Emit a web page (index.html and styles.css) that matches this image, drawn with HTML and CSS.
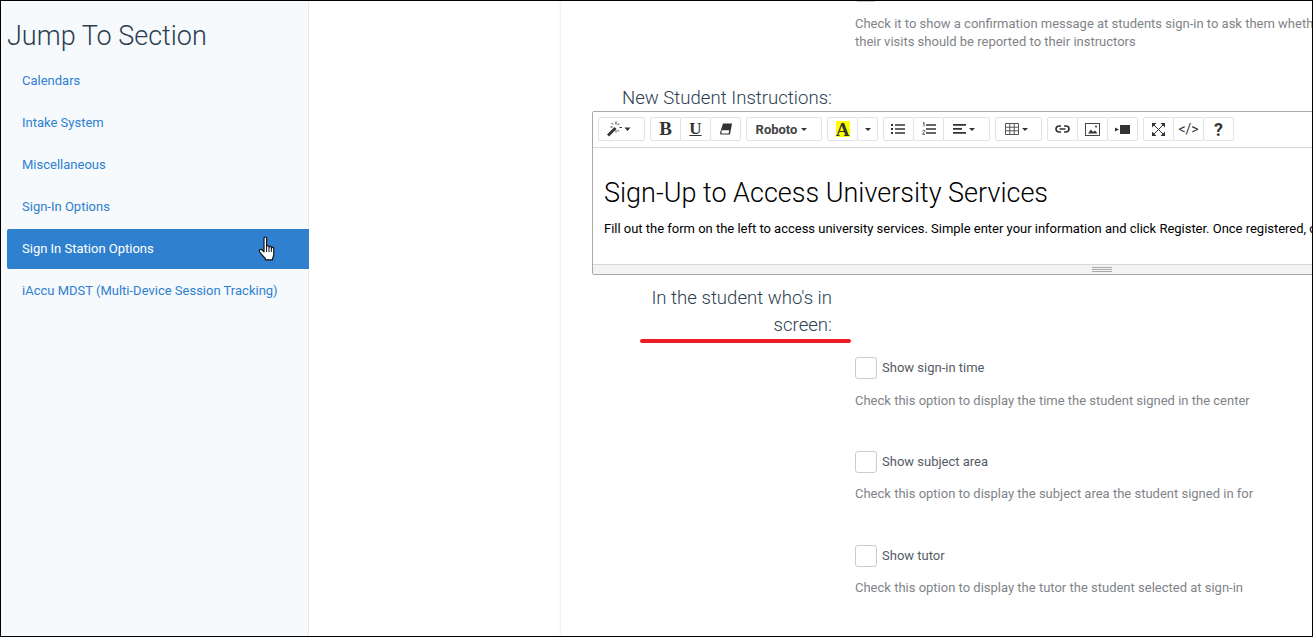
FILE: index.html
```html
<!DOCTYPE html>
<html lang="en">
<head>
<meta charset="utf-8">
<title>Jump To Section</title>
<link rel="stylesheet" href="styles.css">
</head>
<body>
<div class="frame">
  <aside class="sidebar">
    <h2 class="side-title">Jump To Section</h2>
    <nav class="side-nav">
      <a class="side-link">Calendars</a>
      <a class="side-link">Intake System</a>
      <a class="side-link">Miscellaneous</a>
      <a class="side-link">Sign-In Options</a>
      <a class="side-link active">Sign In Station Options
        <svg class="hand" width="20" height="26" viewBox="0 0 20 26"><path d="M6 2.200c0-1.600 2.600-1.600 2.600 0v8.300c0-1.300 2.400-1.300 2.400 0v.8c0-1.200 2.400-1.200 2.400 .1v.8c0-1.100 2.400-1 2.400 .4v5.200c0 2.200-.6 3.300-1.200 4.800v1.200H7.400v-1.200C5.400 20.500 3.500 18.200 1.800 16c-1.400-1.800 .6-3.600 2.300-2L6 15.800z" fill="#fff" stroke="#111" stroke-width="1.200" stroke-linejoin="round"/><path d="M8.600 11v5M11 11.500v4.500M13.400 12v4" stroke="#111" stroke-width="1" fill="none"/></svg>
      </a>
      <a class="side-link">iAccu MDST (Multi-Device Session Tracking)</a>
    </nav>
  </aside>
  <main class="main">
    <div class="sheet">
      <div class="top-row">
        <span class="cut-box"></span>
        <p class="hint top-hint">Check it to show a confirmation message at students sign-in to ask them whether<br>their visits should be reported to their instructors</p>
      </div>
      <label class="field-label instr-label">New Student Instructions:</label>
      <section class="editor">
        <div class="toolbar">
          <div class="group"><button class="btn w47 pad"><svg width="26" height="18" viewBox="0 0 26 18"><path d="M1 14.500 8.500 7l2 2-7.500 7.500z" fill="#333"/><path d="M10 1.500v3M10 10.500v2M13.500 7.500h2.500M4.500 7h2M13 3.500l-1.500 1.500M5.500 3l1.500 1.500M13 11.500l-1.500-1.500" stroke="#333" stroke-width="1" fill="none"/><path d="M18.500 7.500h6l-3 3.500z" fill="#333"/></svg></button></div>
          <div class="group">
            <button class="btn w30 serif big">B</button>
            <button class="btn w30 serif under">U</button>
            <button class="btn w30"><svg width="13" height="12" viewBox="0 0 13 12"><path d="M4 .5h9L11 11.500H1.500L1 10z" fill="#333"/><path d="M2.700 7.200h7.600l-.7 3.200H2.300z" fill="#fff"/></svg></button>
          </div>
          <div class="group"><button class="btn w75 bold">Roboto <i class="caret"></i></button></div>
          <div class="group">
            <button class="btn w30 serif big"><span class="hl">A</span></button>
            <button class="btn w20"><i class="caret"></i></button>
          </div>
          <div class="group">
            <button class="btn w30 nudge"><svg width="14" height="12" viewBox="0 0 14 12"><path d="M0 1h2v2H0zM0 5h2v2H0zM0 9h2v2H0zM4 1.200h10v1.600H4zM4 5.200h10v1.600H4zM4 9.200h10v1.600H4z" fill="#333"/></svg></button>
            <button class="btn w30"><svg width="14" height="14" viewBox="0 0 14 14"><path d="M4 2.200h10v1.600H4zM4 6.200h10v1.600H4zM4 10.200h10v1.600H4z" fill="#333"/><path d="M1 1l1-.6v4M.5 9c.5-1 2.500-.8 2.300.4-.1.800-1.800 1.600-2.300 2.800h2.500" stroke="#333" stroke-width=".9" fill="none"/></svg></button>
            <button class="btn w47 pad"><svg width="13" height="12" viewBox="0 0 13 12"><path d="M0 1h13v1.800H0zM0 5h9v1.800H0zM0 9h13v1.800H0z" fill="#333"/></svg> <i class="caret"></i></button>
          </div>
          <div class="group"><button class="btn w47 pad"><svg width="14" height="12" viewBox="0 0 14 12"><path d="M.5 .5h13v11H.5zM.5 4.200h13M.5 7.800h13M4.800 .5v11M9.200 .5v11" stroke="#555" stroke-width="1" fill="none"/></svg> <i class="caret"></i></button></div>
          <div class="group">
            <button class="btn w30"><svg width="15" height="8" viewBox="0 0 15 8"><path d="M6 1H4a3 3 0 0 0 0 6H6M9 1h2a3 3 0 0 1 0 6H9M4.500 4h6" stroke="#333" stroke-width="1.700" fill="none"/></svg></button>
            <button class="btn w30"><svg width="15" height="13" viewBox="0 0 15 13"><rect x=".5" y=".5" width="14" height="12" fill="none" stroke="#444"/><path d="M3 10.500l3-4 2 2.500 2-1.500 2.500 3z" fill="#333"/><circle cx="11" cy="3.500" r="1" fill="#333"/></svg></button>
            <button class="btn w30"><svg width="15" height="9" viewBox="0 0 15 9"><path d="M0 2.500l4 2-4 2zM5 0h10v9H5z" fill="#333"/></svg></button>
          </div>
          <div class="group">
            <button class="btn w30"><svg width="13" height="13" viewBox="0 0 13 13"><path d="M2 2l9 9M11 2l-9 9" stroke="#333" stroke-width="1" fill="none"/><path d="M0 0h4.500L0 4.500zM13 0v4.500L8.500 0zM0 13V8.500L4.500 13zM13 13H8.500L13 8.500z" fill="#333"/></svg></button>
            <button class="btn w30 code">&lt;/&gt;</button>
            <button class="btn w30 help">?</button>
          </div>
        </div>
        <div class="editor-body">
          <h1 class="doc-title">Sign-Up to Access University Services</h1>
          <p class="doc-text">Fill out the form on the left to access university services. Simple enter your information and click Register. Once registered, click the link to continue with your session today.</p>
        </div>
        <div class="resize-bar"><span class="grip"></span></div>
      </section>
      <div class="screen-row">
        <h3 class="field-label wrap-label">In the student who's in screen:<span class="annotation"></span></h3>
      </div>
      <div class="options">
        <div class="option">
          <label class="check"><span class="box"></span>Show sign-in time</label>
          <p class="hint">Check this option to display the time the student signed in the center</p>
        </div>
        <div class="option">
          <label class="check"><span class="box"></span>Show subject area</label>
          <p class="hint">Check this option to display the subject area the student signed in for</p>
        </div>
        <div class="option">
          <label class="check"><span class="box"></span>Show tutor</label>
          <p class="hint">Check this option to display the tutor the student selected at sign-in</p>
        </div>
      </div>
    </div>
  </main>
</div>
</body>
</html>
```
FILE: styles.css
```css
* { box-sizing: border-box; }
html, body { margin: 0; padding: 0; height: 100%; overflow: hidden; background: #fff; }
body { font-family: Roboto, "Liberation Sans", sans-serif; font-size: 13px; color: #333; }
.frame { width: 1313px; height: 637px; border: 1px solid #000; display: flex; overflow: hidden; background: #fff; }

.sidebar { width: 308px; flex: none; background: #f6fafd; border-right: 1px solid #e4eaf1; padding: 0 0 0 6px; }
.side-title { margin: 0; padding-top: 18px; height: 60px; font-size: 27px; line-height: 34px; font-weight: 300; color: #2c3e50; }
.side-nav { display: flex; flex-direction: column; gap: 2px; }
.side-link { position: relative; display: block; height: 40px; line-height: 40px; padding-left: 15px; font-size: 13px; color: #2f80cf; border-radius: 2px 0 0 2px; }
.side-link.active { background: #2f80cf; color: #fff; width: 302px; }
.hand { position: absolute; left: 251px; top: 7px; }

.main { flex: 1; min-width: 0; padding-left: 252px; overflow: hidden; }
.sheet { width: 751px; height: 635px; background: #fff; box-shadow: -1px 0 2px #eee; padding-left: 31px; }

.top-row { position: relative; height: 96px; padding: 14px 0 0 263px; }
.cut-box { display: block; position: absolute; left: 263px; top: -21px; width: 22px; height: 22px; border: 1px solid #ccc; border-radius: 3px; }
.hint { margin: 0; font-size: 13px; line-height: 18px; color: #7f8489; white-space: nowrap; }
.field-label { display: block; margin: 0; font-weight: 300; font-size: 18.6px; color: #2c3e50; text-align: right; }
.instr-label { width: 240px; margin-top: -12px; line-height: 26px; height: 26px; }

.editor { width: 1020px; height: 164px; border: 1px solid #a9a9a9; border-radius: 2px; background: #fff; }
.toolbar { display: flex; gap: 5px; height: 36px; padding: 5px 0 0 5px; background: #fff; border-bottom: 1px solid #d5d8dc; align-items: flex-start; }
.group { display: flex; height: 24px; }
.btn { height: 24px; padding: 0; margin: 0 0 0 -1px; border: 1px solid #e3e3e3; border-radius: 2px; background: #fff; color: #333; display: flex; align-items: center; justify-content: center; gap: 3px; font-family: Roboto, sans-serif; font-size: 12px; }
.group .btn:first-child { margin-left: 0; }
.w20 { width: 21px; }
.w30 { width: 31px; }
.w47 { width: 47px; }
.w75 { width: 76px; }
.pad { padding-right: 5px; }
.nudge { padding-right: 2px; }
.bold { font-weight: 700; color: #444; font-size: 13px; gap: 4px; padding-right: 5px; }
.serif { font-family: "Liberation Serif", serif; font-weight: 700; font-size: 17px; }
.big { font-size: 19px; }
.under { text-decoration: underline; }
.hl { background: #ff0; display: block; width: 14px; height: 16px; line-height: 17px; text-align: center; }
.caret { display: inline-block; width: 0; height: 0; border-left: 3px solid transparent; border-right: 3px solid transparent; border-top: 3.500px solid #333; }
.code { font-size: 14px; }
.help { font-size: 18px; font-weight: 700; }

.editor-body { height: 116px; padding: 28px 0 0 11px; overflow: hidden; background: #fff; }
.doc-title { margin: 0; font-size: 27px; line-height: 34px; font-weight: 300; color: #000; white-space: nowrap; }
.doc-text { margin: 10px 0 0; font-size: 13px; line-height: 18px; color: #000; white-space: nowrap; letter-spacing: -0.015px; }
.resize-bar { height: 10px; background: #f3f3f3; border-top: 1px solid #d5d8dc; display: flex; justify-content: center; }
.grip { display: block; width: 20px; height: 5px; margin-top: 2px; border-top: 1px solid #a9a9a9; border-bottom: 1px solid #a9a9a9; position: relative; }
.grip::after { content: ""; position: absolute; left: 0; right: 0; top: 1px; height: 1px; background: #a9a9a9; }

.screen-row { height: 81px; padding-top: 10px; }
.wrap-label { width: 240px; padding-left: 40px; line-height: 27px; position: relative; }
.annotation { position: absolute; left: 48px; top: 54px; width: 211px; height: 4px; background: #ed1c24; border-radius: 2px; }

.options { padding-left: 263px; }
.option { height: 94px; }
.check { display: flex; align-items: center; gap: 5px; height: 23px; color: #555b66; font-size: 13px; }
.box { width: 22px; height: 22px; border: 1px solid #ccc; border-radius: 3px; background: #fff; flex: none; }
.option .hint { margin-top: 12px; }
.option:first-child .hint { margin-top: 13px; }
```
